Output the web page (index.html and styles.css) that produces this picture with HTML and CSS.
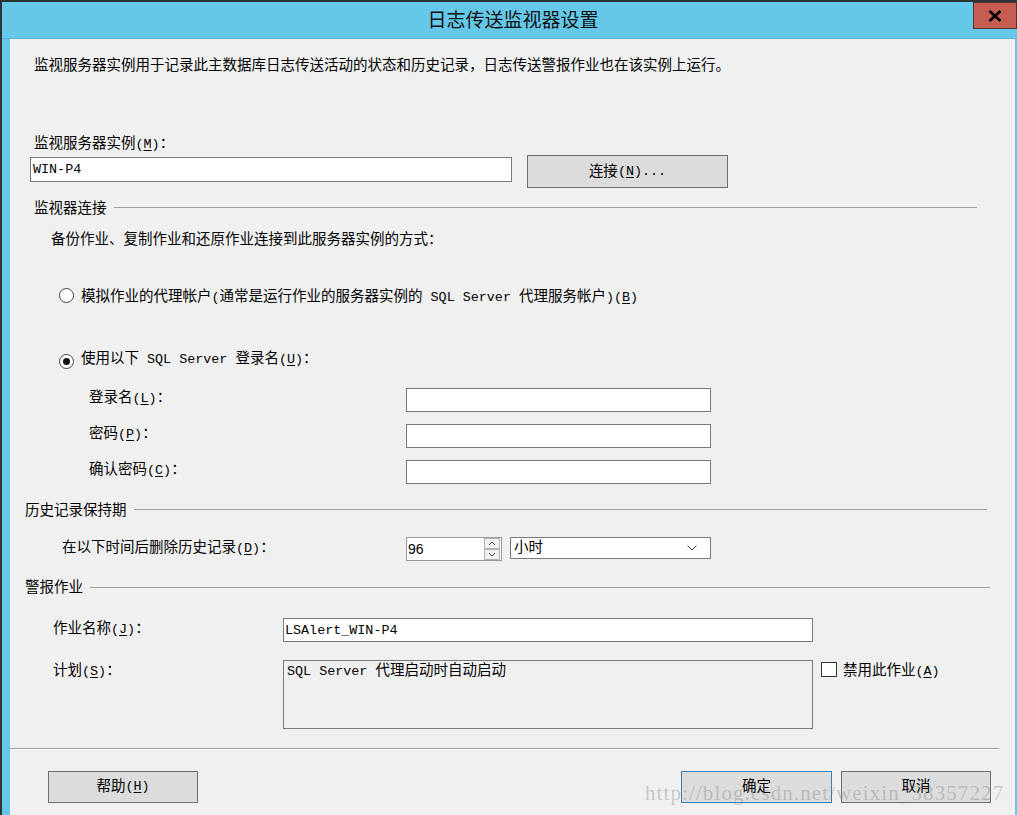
FILE: index.html
```html
<!DOCTYPE html>
<html lang="zh-CN">
<head>
<meta charset="utf-8">
<title>日志传送监视器设置</title>
<link rel="stylesheet" href="styles.css">
</head>
<body>
<div class="window">
  <div class="titlebar">
    <div class="title">日志传送监视器设置</div>
    <div class="close"><svg width="14" height="12" viewBox="0 0 14 12"><path d="M1.5 1 L12.5 11 M12.5 1 L1.5 11" stroke="#000" stroke-width="2.6" fill="none"/></svg></div>
  </div>
  <div class="panel">
    <div class="row desc">监视服务器实例用于记录此主数据库日志传送活动的状态和历史记录，日志传送警报作业也在该实例上运行。</div>
    <div class="row lbl-m">监视服务器实例<span class="a">(<u>M</u>)</span>：</div>
    <div class="server-row">
      <div class="textbox server"><span class="a">WIN-P4</span></div>
      <div class="btn connect">连接<span class="a">(<u>N</u>)...</span></div>
    </div>
    <div class="group g1"><span>监视器连接</span><i></i></div>
    <div class="row backup">备份作业、复制作业和还原作业连接到此服务器实例的方式：</div>
    <div class="row radio-row r1"><span class="radio"></span><span>模拟作业的代理帐户<span class="a">(</span>通常是运行作业的服务器实例的<span class="a"> SQL Server </span>代理服务帐户<span class="a">)(<u>B</u>)</span></span></div>
    <div class="row radio-row r2"><span class="radio on"></span><span>使用以下<span class="a"> SQL Server </span>登录名<span class="a">(<u>U</u>)</span>：</span></div>
    <div class="field-row f-login"><span class="flabel">登录名<span class="a">(<u>L</u>)</span>：</span><span class="textbox cred"></span></div>
    <div class="field-row f-pass"><span class="flabel">密码<span class="a">(<u>P</u>)</span>：</span><span class="textbox cred"></span></div>
    <div class="field-row f-confirm"><span class="flabel">确认密码<span class="a">(<u>C</u>)</span>：</span><span class="textbox cred"></span></div>
    <div class="group g2"><span>历史记录保持期</span><i></i></div>
    <div class="field-row f-delete">
      <span class="flabel">在以下时间后删除历史记录<span class="a">(<u>D</u>)</span>：</span>
      <span class="spinner"><span class="num">96</span><svg class="spin" width="16" height="23" viewBox="0 0 16 23"><rect x="0.5" y="0.5" width="15" height="10" fill="#f0f0f0" stroke="#b4b4b4"/><rect x="0.5" y="11.5" width="15" height="10" fill="#f0f0f0" stroke="#b4b4b4"/><path d="M5 7 L8 4 L11 7" stroke="#444" fill="none"/><path d="M5 15 L8 18 L11 15" stroke="#444" fill="none"/></svg></span>
      <span class="select">小时<svg class="chev" width="10" height="6" viewBox="0 0 10 6"><path d="M0.5 0.5 L5 5 L9.5 0.5" stroke="#444" fill="none"/></svg></span>
    </div>
    <div class="group g3"><span>警报作业</span><i></i></div>
    <div class="field-row f-job"><span class="flabel">作业名称<span class="a">(<u>J</u>)</span>：</span><span class="textbox job"><span class="a">LSAlert_WIN-P4</span></span></div>
    <div class="field-row f-sched">
      <span class="flabel">计划<span class="a">(<u>S</u>)</span>：</span>
      <span class="schedule"><span class="a">SQL Server </span>代理启动时自动启动</span>
      <span class="checkbox"></span>
      <span class="cblabel">禁用此作业<span class="a">(<u>A</u>)</span></span>
    </div>
    <div class="sep"></div>
    <div class="buttons">
      <div class="btn help">帮助<span class="a">(<u>H</u>)</span></div>
      <div class="btn ok">确定</div>
      <div class="btn cancel">取消</div>
    </div>
  </div>
  <div class="watermark">http://blog.csdn.net/weixin_38357227</div>
</div>
</body>
</html>
```
FILE: styles.css
```css
* { box-sizing: border-box; margin: 0; padding: 0; }
html, body { width: 1017px; height: 815px; overflow: hidden; }
body {
  font-family: "Liberation Mono", "Noto Sans CJK SC", monospace;
  font-size: 14.5px;
  color: #000;
  background: #65c8e9;
}
u { text-decoration: underline; text-underline-offset: 2px; }
.a { font-size: 13.4px; }

.window {
  position: relative;
  width: 1017px;
  height: 815px;
  background: #65c8e9;
  border-top: 2px solid #2e3338;
  border-left: 2px solid #2e3338;
  display: flex;
  flex-direction: column;
}
.titlebar {
  position: relative;
  flex: none;
  height: 37px;
  padding-top: 7px;
  padding-left: 7px;
  text-align: center;
  border-bottom: 1px solid #5ab6d6;
}
.title { font-size: 19px; line-height: 26px; color: #111; }
.close {
  position: absolute;
  top: 0;
  right: 0;
  width: 44px;
  height: 27px;
  background: #c75c50;
  border: 1px solid #4d3531;
  display: flex;
  align-items: center;
  justify-content: center;
}

.panel {
  flex: 1;
  margin-left: 8px;
  margin-right: 2px;
  background: #f0f0f0;
  display: flex;
  flex-direction: column;
}
.row { height: 20px; line-height: 20px; white-space: nowrap; }
.desc { margin-top: 17px; margin-left: 24px; }
.lbl-m { margin-top: 58px; margin-left: 24px; }

.server-row { margin-top: 1px; margin-left: 20px; height: 33px; display: flex; align-items: flex-start; }
.textbox {
  display: block;
  background: #fff;
  border: 1px solid #7a7a7a;
  padding-left: 2px;
  line-height: 22px;
  white-space: nowrap;
}
.server { width: 482px; height: 25px; margin-top: 2px; }
.btn {
  background: #dcdcdc;
  border: 1px solid #707070;
  display: flex;
  align-items: center;
  justify-content: center;
  line-height: 20px;
  white-space: nowrap;
}
.connect { width: 201px; height: 33px; margin-left: 15px; }

.group { display: flex; align-items: flex-start; height: 20px; line-height: 20px; white-space: nowrap; }
.group i { flex: 1; height: 1px; background: #a0a0a0; margin-left: 7px; margin-top: 8px; }
.g1 { margin-top: 11px; margin-left: 24px; margin-right: 38px; }
.g2 { margin-top: 17px; margin-left: 15px; margin-right: 28px; }
.g3 { margin-top: 17px; margin-left: 15px; margin-right: 25px; }
.g3 i { margin-top: 9px; }

.backup { margin-top: 11px; margin-left: 41px; }

.radio-row { display: flex; align-items: flex-start; margin-left: 49px; }
.radio {
  flex: none;
  width: 15px;
  height: 15px;
  border-radius: 50%;
  border: 1px solid #444;
  background: #fff;
  margin-right: 7px;
  display: flex;
  align-items: center;
  justify-content: center;
}
.radio.on::after { content: ""; width: 7px; height: 7px; border-radius: 50%; background: #111; }
.r1 { margin-top: 37px; }
.r1 .radio { margin-top: 1px; }
.r2 { margin-top: 42px; }
.r2 .radio { margin-top: 5px; }

.field-row { display: flex; align-items: flex-start; line-height: 20px; white-space: nowrap; }
.flabel { display: block; flex: none; margin-top: 1px; }
.f-login { margin-top: 18px; margin-left: 79px; }
.f-pass, .f-confirm { margin-top: 11px; margin-left: 79px; }
.f-login .flabel, .f-pass .flabel, .f-confirm .flabel { width: 317px; }
.cred { width: 305px; height: 24px; margin-top: 1px; }

.f-delete { margin-top: 16px; margin-left: 52px; }
.f-delete .flabel { width: 344px; }
.spinner {
  display: flex;
  align-items: center;
  justify-content: space-between;
  width: 96px;
  height: 24px;
  background: #fff;
  border: 1px solid #9a9a9a;
  padding-left: 1px;
  padding-right: 1px;
}
.num { font-family: "Liberation Sans", sans-serif; font-size: 14px; line-height: 20px; }
.select {
  display: flex;
  align-items: center;
  justify-content: space-between;
  width: 201px;
  height: 22px;
  margin-left: 8px;
  background: #fff;
  border: 1px solid #7a7a7a;
  padding-left: 3px;
  padding-right: 13px;
  line-height: 20px;
}

.f-job { margin-top: 20px; margin-left: 43px; }
.f-job .flabel, .f-sched .flabel { width: 230px; }
.job { width: 530px; height: 24px; line-height: 22px; padding-left: 1px; }
.f-sched { margin-top: 18px; margin-left: 43px; }
.schedule {
  display: block;
  width: 530px;
  height: 69px;
  border: 1px solid #7a7a7a;
  padding: 0 0 0 3px;
  line-height: 20px;
}
.checkbox {
  display: block;
  flex: none;
  width: 16px;
  height: 15px;
  margin-left: 8px;
  margin-top: 2px;
  background: #fff;
  border: 1px solid #333;
}
.cblabel { display: block; margin-left: 6px; margin-top: 1px; }

.sep { margin-top: 19px; margin-right: 16px; height: 2px; border-top: 1px solid #a0a0a0; border-bottom: 1px solid #fff; }

.buttons { margin-top: 21px; height: 32px; display: flex; margin-left: 38px; margin-right: 24px; }
.buttons .btn { height: 32px; }
.help { width: 150px; }
.ok { width: 151px; margin-left: auto; border-color: #3c7fb1; }
.cancel { width: 150px; margin-left: 9px; }

.watermark {
  position: absolute;
  left: 643px;
  top: 781px;
  font-family: "Liberation Serif", serif;
  font-size: 21px;
  line-height: 21px;
  letter-spacing: 1.1px;
  color: rgba(110, 110, 110, 0.33);
  white-space: nowrap;
}
```
